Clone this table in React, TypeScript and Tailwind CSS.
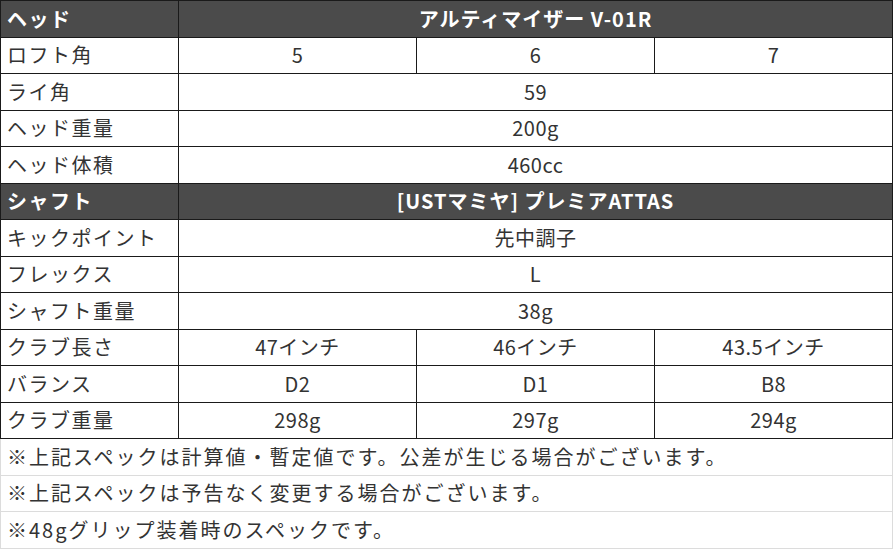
const font = { fontFamily: '"Noto Sans CJK JP", "Noto Sans", sans-serif' };

type Row = { label: string; values: string[]; head?: boolean };

const rows: Row[] = [
  { label: "ヘッド", values: ["アルティマイザー V-01R"], head: true },
  { label: "ロフト角", values: ["5", "6", "7"] },
  { label: "ライ角", values: ["59"] },
  { label: "ヘッド重量", values: ["200g"] },
  { label: "ヘッド体積", values: ["460cc"] },
  { label: "シャフト", values: ["[USTマミヤ] プレミアATTAS"], head: true },
  { label: "キックポイント", values: ["先中調子"] },
  { label: "フレックス", values: ["L"] },
  { label: "シャフト重量", values: ["38g"] },
  { label: "クラブ長さ", values: ["47インチ", "46インチ", "43.5インチ"] },
  { label: "バランス", values: ["D2", "D1", "B8"] },
  { label: "クラブ重量", values: ["298g", "297g", "294g"] },
];

const notes = [
  "※上記スペックは計算値・暫定値です。公差が生じる場合がございます。",
  "※上記スペックは予告なく変更する場合がございます。",
  "※48gグリップ装着時のスペックです。",
];

export default function App() {
  return (
    <div className="w-[894px] h-[550px] bg-white" style={font}>
      <table className="w-[892px] table-fixed border-collapse text-[20px] text-[#333]">
        <colgroup>
          <col className="w-[178px]" />
          <col className="w-[238px]" />
          <col className="w-[238px]" />
          <col className="w-[238px]" />
        </colgroup>
        <tbody>
          {rows.map((r) => (
            <tr key={r.label} className={r.head ? "h-[36.5px] bg-[#4b4b4b] text-white font-bold" : "h-[36.5px]"}>
              <td className="border border-[#1a1a1a] px-[6px] py-0 leading-none tracking-[1.5px]">{r.label}</td>
              {r.values.map((v, i) => (
                <td
                  key={i}
                  colSpan={r.values.length === 1 ? 3 : 1}
                  className={
                    r.head
                      ? "border border-[#1a1a1a] px-0 py-0 text-center leading-none tracking-[1px]"
                      : "border border-[#1a1a1a] px-0 py-0 text-center leading-none tracking-[0.5px]"
                  }
                >
                  {v}
                </td>
              ))}
            </tr>
          ))}
          {notes.map((n) => (
            <tr key={n} className="h-[36.5px]">
              <td colSpan={4} className="border border-[#dcdcdc] px-[6px] py-0 leading-none tracking-[2px]">
                {n}
              </td>
            </tr>
          ))}
        </tbody>
      </table>
    </div>
  );
}
